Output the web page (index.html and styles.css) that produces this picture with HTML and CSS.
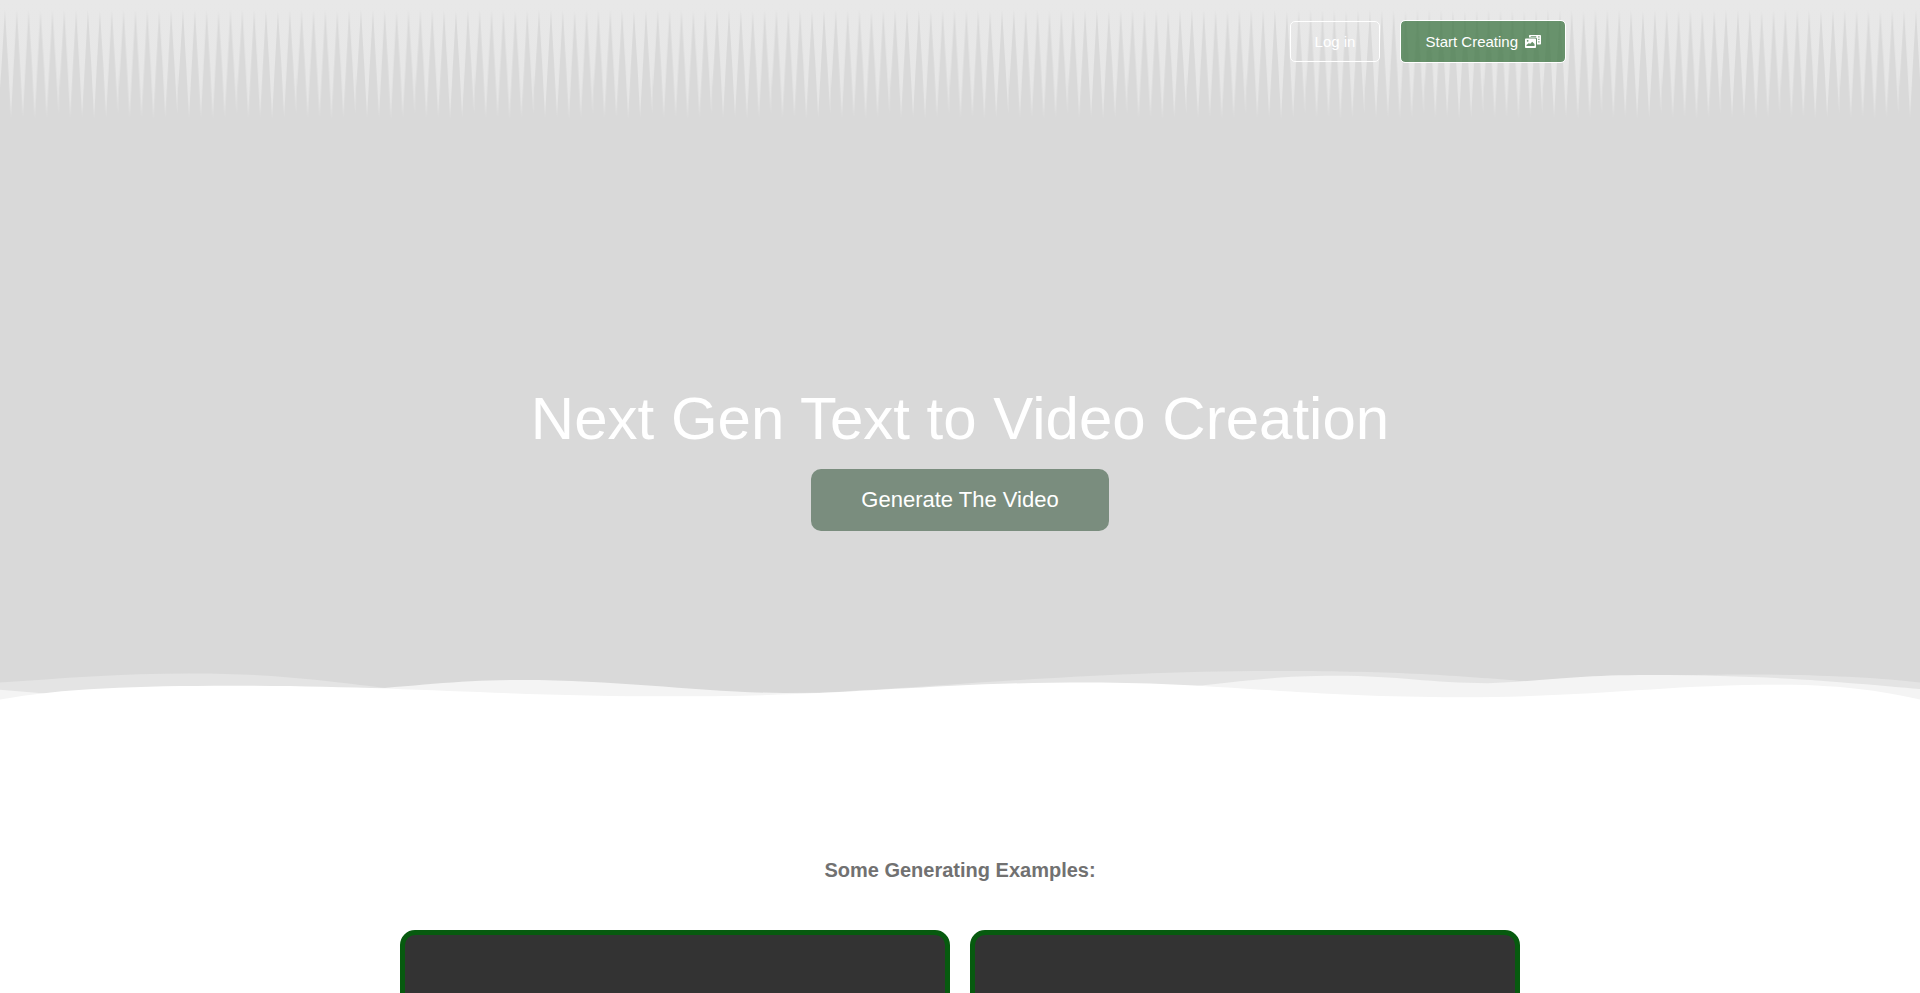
FILE: index.html
```
<!DOCTYPE html>
<html lang="en">
<head>
  <meta charset="UTF-8" />
  <meta name="viewport" content="width=device-width, initial-scale=1" />
  <title>Next Gen Text to Video Creation</title>
  <link rel="stylesheet" href="styles.css">
</head>
<body>

<section class="hero">
  <svg class="spikes" viewBox="0 0 1920 120" preserveAspectRatio="none" aria-hidden="true">
    <defs>
      <linearGradient id="fade" x1="0" y1="0" x2="0" y2="1">
        <stop offset="0" stop-color="#e8e8e8"/>
        <stop offset="0.7" stop-color="#e7e7e7"/>
        <stop offset="1" stop-color="#e4e4e4"/>
      </linearGradient>
      <pattern id="spike" width="59.35" height="120" patternUnits="userSpaceOnUse">
        <path fill="url(#fade)" d="M0 0H59.35V68L58.6 114 56 68 52.4 10 49.3 68 46.6 117 44.1 68 40.5 11 37.3 68 34.7 119 32.1 68 28.6 10 25.4 68 22.8 117 20.2 68 16.8 10 13.5 68 10.9 118 8.3 68 4.9 10 1.4 68 0 88Z"/>
      </pattern>
    </defs>
    <rect width="1920" height="120" fill="url(#spike)"/>
  </svg>

  <header class="topbar">
    <button class="btn btn-login" type="button">Log in</button>
    <button class="btn btn-start" type="button">
      Start Creating
      <svg class="icon" viewBox="0 0 640 512" aria-hidden="true">
        <path fill="currentColor" fill-rule="evenodd" d="M200 0h400c22 0 40 18 40 40v300c0 22-18 40-40 40H480V160c0-36-28-64-64-64H160V40c0-22 18-40 40-40zM230 40v30h220V40zM530 50v50h50V50zM530 150v50h50v-50zM530 250v50h50v-50z"/>
        <path fill="currentColor" fill-rule="evenodd" d="M40 132h360c22 0 40 18 40 40v300c0 22-18 40-40 40H40c-22 0-40-18-40-40V172c0-22 18-40 40-40zM60 440h320v-80l-90-90-90 90-40-40-100 80zM70 230a36 36 0 1 0 72 0 36 36 0 1 0-72 0z"/>
      </svg>
    </button>
  </header>

  <div class="hero-body">
    <h1>Next Gen Text to Video Creation</h1>
    <button class="btn-generate" type="button">Generate The Video</button>
  </div>

  <svg class="waves" viewBox="0 670 1920 50" preserveAspectRatio="none" aria-hidden="true">
    <path fill="#e4e4e4" d="M0 690C61 685 120 679 190 679C270 679 320 687 400 699L783 706C820 703 850 700 885 698C987 690 1120 676 1280 676C1400 676 1460 682 1529 689L1660 682C1780 678 1860 682 1920 690V720H0Z"/>
    <path fill="#f4f4f4" d="M0 699L60 705L350 700C420 694 460 687 522 687C620 687 700 702 783 703L950 702L1180 696C1240 690 1270 682 1335 682C1400 682 1430 691 1488 691C1540 689 1570 681 1650 681C1780 681 1860 692 1920 698V720H0Z"/>
    <path fill="#fff" d="M0 711C60 697 140 694 230 694C400 694 500 707 680 707C850 707 930 690 1089 690C1220 690 1300 708 1460 708C1600 708 1660 693 1780 693C1850 693 1890 703 1920 711V720H0Z"/>
  </svg>
</section>

<section class="examples">
  <h2>Some Generating Examples:</h2>
  <div class="videos">
    <video class="video"></video>
    <video class="video"></video>
  </div>
</section>

</body>
</html>
```

FILE: styles.css
```
* { box-sizing: border-box; }
body { font-family: "Liberation Sans", Arial, sans-serif; margin: 0; background: #fff; }
h1, h2 { margin: 0; }
button { font-family: inherit; cursor: pointer; }

.hero { position: relative; display: flex; flex-direction: column; background: #d9d9d9; }
.spikes { position: absolute; top: 0; left: 0; width: 100%; height: 120px; }

.topbar { position: relative; display: flex; justify-content: flex-end; align-items: center; gap: 20px; width: 100%; max-width: 1212px; margin: 0 auto; padding: 20px 0; }
.btn { display: flex; align-items: center; gap: 7px; color: #fff; font-size: 15px; line-height: 17px; border: 1px solid #fff; border-radius: 5px; }
.btn-login { background: transparent; padding: 11px 24px; }
.btn-start { background: rgba(50, 110, 55, 0.7); background-clip: padding-box; padding: 12px 24px; }
.icon { width: 16px; height: 13px; }

.hero-body { display: flex; flex-direction: column; align-items: center; gap: 20px; padding: 306px 20px 135px; text-align: center; }
.hero-body h1 { color: #fff; font-size: 60px; font-weight: 400; line-height: 60px; }
.btn-generate { background: #7a8d7e; color: #fff; font-size: 22px; line-height: 26px; padding: 18px 50px; border: none; border-radius: 10px; }
.waves { display: block; width: 100%; height: 41px; }

.examples { padding: 151px 20px 60px; text-align: center; }
.examples h2 { color: #717171; font-size: 20px; line-height: 24px; margin-bottom: 48px; }
.videos { display: grid; grid-template-columns: 1fr 1fr; gap: 20px; max-width: 1120px; margin: 0 auto; }
.video { display: block; width: 100%; height: 310px; background: #333; border: 5px solid #075a0f; border-radius: 15px; }
```
